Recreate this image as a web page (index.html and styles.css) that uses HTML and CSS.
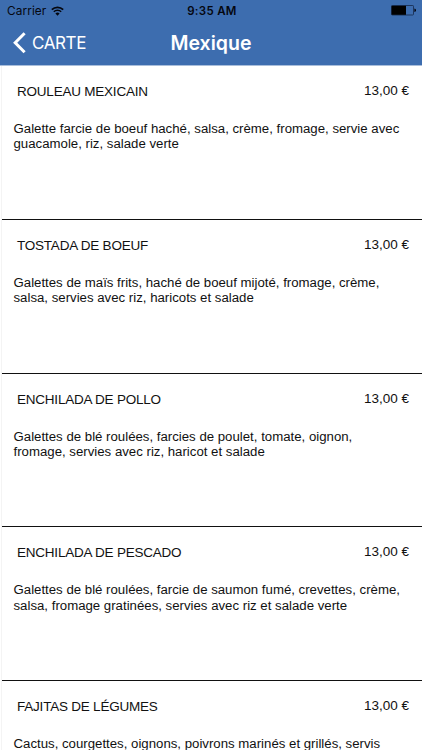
FILE: index.html
```html
<!DOCTYPE html>
<html lang="fr">
<head>
    <meta charset="UTF-8">
    <meta name="viewport" content="width=device-width, initial-scale=1.0">
    <title>Mexique</title>
    <link rel="stylesheet" href="styles.css">
</head>
<body>
    <header>
        <div class="status-bar">
            <div class="carrier">
                <span class="carrier-name">Carrier</span>
                <svg class="wifi" width="13" height="10" viewBox="0 0 13 10">
                    <path d="M0.8 3.7a8 8 0 0 1 11.4 0" fill="none" stroke="#05070f" stroke-width="1.7"/>
                    <path d="M2.8 5.8a5.3 5.3 0 0 1 7.4 0" fill="none" stroke="#05070f" stroke-width="1.5"/>
                    <path d="M6.5 9.8L4.4 7.6a3 3 0 0 1 4.2 0z" fill="#05070f"/>
                </svg>
            </div>
            <span class="time">9:35 AM</span>
            <svg class="battery" width="26" height="11" viewBox="0 0 26 11">
                <rect x="1.5" y="0.5" width="22" height="9.5" rx="0.8" fill="none" stroke="#15284a" stroke-width="0.8"/>
                <rect x="1.6" y="0.8" width="14.4" height="9" fill="#000"/>
                <path d="M24.4 3.6a1.6 1.7 0 0 1 0 3.4z" fill="#05070f"/>
            </svg>
        </div>
        <nav class="nav-bar">
            <a class="back" href="#">
                <svg width="13" height="22" viewBox="0 0 13 22">
                    <path d="M11.6 1.3L2.2 10.8L11.6 20.3" fill="none" stroke="#fff" stroke-width="3"/>
                </svg>
                <span class="back-label">CARTE</span>
            </a>
            <h1>Mexique</h1>
        </nav>
    </header>

    <main>
        <section class="dish">
            <div class="dish-head">
                <h2>ROULEAU MEXICAIN</h2>
                <span class="price">13,00 €</span>
            </div>
            <p>Galette farcie de boeuf haché, salsa, crème, fromage, servie avec<br>guacamole, riz, salade verte</p>
        </section>
        <section class="dish">
            <div class="dish-head">
                <h2>TOSTADA DE BOEUF</h2>
                <span class="price">13,00 €</span>
            </div>
            <p>Galettes de maïs frits, haché de boeuf mijoté, fromage, crème,<br>salsa, servies avec riz, haricots et salade</p>
        </section>
        <section class="dish">
            <div class="dish-head">
                <h2>ENCHILADA DE POLLO</h2>
                <span class="price">13,00 €</span>
            </div>
            <p>Galettes de blé roulées, farcies de poulet, tomate, oignon,<br>fromage, servies avec riz, haricot et salade</p>
        </section>
        <section class="dish">
            <div class="dish-head">
                <h2>ENCHILADA DE PESCADO</h2>
                <span class="price">13,00 €</span>
            </div>
            <p>Galettes de blé roulées, farcie de saumon fumé, crevettes, crème,<br>salsa, fromage gratinées, servies avec riz et salade verte</p>
        </section>
        <section class="dish">
            <div class="dish-head">
                <h2>FAJITAS DE LÉGUMES</h2>
                <span class="price">13,00 €</span>
            </div>
            <p>Cactus, courgettes, oignons, poivrons marinés et grillés, servis</p>
        </section>
    </main>
</body>
</html>
```
FILE: styles.css
```css
* {
    box-sizing: border-box;
}
body {
    margin: 0;
    background-color: #fff;
    color: #111;
    font-family: "Liberation Sans", Arial, sans-serif;
}
header {
    height: 66px;
    background-color: #3d6daf;
    border-bottom: 1px solid #a9bedb;
    font-family: Inter, Roboto, sans-serif;
}
.status-bar {
    display: grid;
    grid-template-columns: 1fr auto 1fr;
    align-items: center;
    height: 21px;
    padding: 0 6px 0 7px;
    color: #05070f;
}
.carrier {
    display: flex;
    align-items: center;
    gap: 5px;
}
.carrier-name {
    font-size: 11.8px;
    letter-spacing: 0.1px;
}
.time {
    padding-left: 1px;
    font-size: 11.5px;
    font-weight: 600;
    letter-spacing: 0.3px;
}
.battery {
    justify-self: end;
}
.nav-bar {
    display: grid;
    grid-template-columns: 1fr auto 1fr;
    align-items: center;
    height: 43px;
    padding: 0 13px 0 13px;
    color: #fff;
}
.back {
    display: flex;
    align-items: center;
    gap: 6px;
    color: #fff;
    text-decoration: none;
}
.back-label {
    font-size: 17px;
    letter-spacing: -0.4px;
}
h1 {
    margin: 0;
    font-size: 19.5px;
    font-weight: 600;
}
main {
    height: 684px;
    margin-left: 1px;
    border-left: 1px solid #f4f4f4;
    overflow: hidden;
}
.dish {
    height: 153.8px;
    padding: 16px 13px 0 12px;
    border-bottom: 1.5px solid #111;
}
.dish-head {
    display: flex;
    justify-content: space-between;
    height: 39px;
    padding-left: 3px;
}
h2 {
    margin: 1px 0 0;
    font-size: 13.5px;
    font-weight: normal;
    letter-spacing: -0.22px;
    line-height: 17px;
}
.price {
    font-size: 13.5px;
    line-height: 17px;
}
.dish p {
    margin: 0 0 0 -0.5px;
    font-size: 13.22px;
    line-height: 15.3px;
    white-space: nowrap;
}
```
